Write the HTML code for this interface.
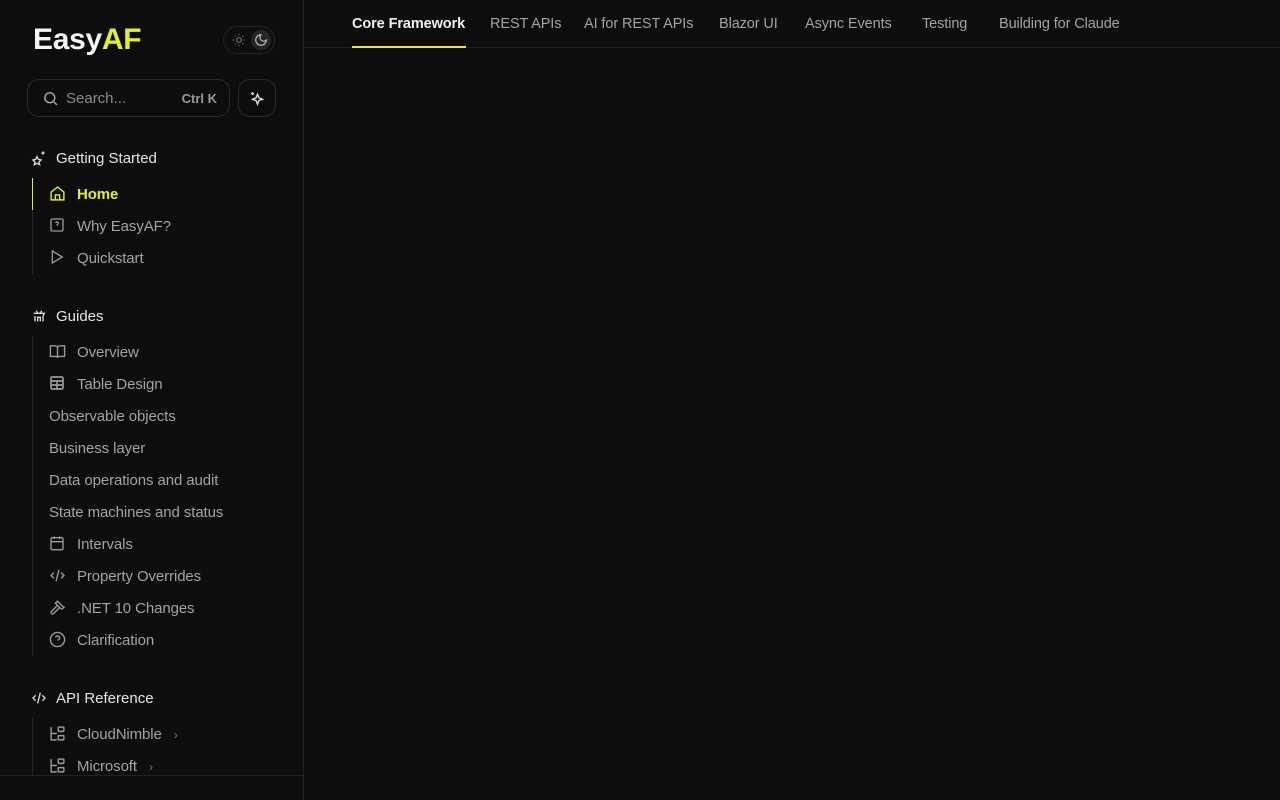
<!DOCTYPE html>
<html><head><meta charset="utf-8"><style>
*{box-sizing:border-box;margin:0;padding:0}
body{width:1280px;height:800px;background:#0d0d0d;font-family:"Liberation Sans",sans-serif;color:#a3a3a3;overflow:hidden;position:relative}
.side{position:absolute;left:0;top:0;width:304px;height:800px;border-right:1px solid #222;}
.logo{position:absolute;left:33px;top:23px;font-size:30px;font-weight:bold;color:#f5f5f5;letter-spacing:-0.3px}
.logo span{color:#e2f02a}
.toggle{position:absolute;left:223px;top:26px;width:52px;height:28px;border:1px solid #262626;border-radius:14px}
.toggle .m{position:absolute;left:27px;top:3px;width:20px;height:20px;border-radius:10px;background:#262626}
.search{position:absolute;left:27px;top:79px;width:203px;height:38px;border:1px solid #2a2a2a;border-radius:12px}
.search .t{position:absolute;left:38px;top:10px;font-size:15px;color:#8a8a8a}
.search .k{position:absolute;right:12px;top:11px;font-size:13px;color:#999;font-weight:bold}
.ai{position:absolute;left:238px;top:79px;width:38px;height:38px;border:1px solid #2a2a2a;border-radius:12px}
.sec{position:absolute;left:56px;font-size:15px;color:#e5e5e5;margin-top:1px}
.si{position:absolute;left:31px}
.vl{position:absolute;left:32px;width:1px;background:#262626}
.it{position:absolute;font-size:15px;color:#a3a3a3;margin-top:1px;letter-spacing:-0.1px}
.ic{position:absolute;left:49px}
.top{position:absolute;left:304px;top:0;right:0;height:48px;border-bottom:1px solid #222}
.nav{position:absolute;top:16px;font-size:14.5px;color:#a3a3a3;letter-spacing:-0.1px}
svg{display:block}
</style></head><body>
<div class="side">
<div class="logo">Easy<span>AF</span></div>
<div class="toggle"><svg style="position:absolute;left:8px;top:6px" width="14" height="14" viewBox="0 0 24 24" fill="none" stroke="#777" stroke-width="2"><circle cx="12" cy="12" r="4"/><path d="M12 2v2M12 20v2M4.9 4.9l1.4 1.4M17.7 17.7l1.4 1.4M2 12h2M20 12h2M4.9 19.1l1.4-1.4M17.7 6.3l1.4-1.4"/></svg><div class="m"><svg style="position:absolute;left:3px;top:3px" width="14" height="14" viewBox="0 0 24 24" fill="none" stroke="#bbb" stroke-width="2"><path d="M12 3a6 6 0 0 0 9 9 9 9 0 1 1-9-9z"/></svg></div></div>
<div class="search"><svg style="position:absolute;left:14px;top:10px" width="17" height="17" viewBox="0 0 24 24" fill="none" stroke="#aaa" stroke-width="2"><circle cx="11" cy="11" r="7"/><path d="M21 21l-4.3-4.3"/></svg><span class="t">Search...</span><span class="k">Ctrl K</span></div>
<div class="ai"><svg style="position:absolute;left:10px;top:10px" width="17" height="17" viewBox="0 0 24 24" fill="none" stroke="#ddd" stroke-width="2"><path d="M12 6l2 5 5 2-5 2-2 5-2-5-5-2 5-2z"/><path d="M5 3v4M3 5h4"/></svg></div>

<svg class="si" style="top:150px" width="16" height="16" viewBox="0 0 24 24" fill="none" stroke="#ddd" stroke-width="2"><path d="M9 10l2 4 4 1-3 3 1 4-4-2-4 2 1-4-3-3 4-1z"/><path d="M18 2v5M15.5 4.5h5"/></svg>
<div class="sec" style="top:149px">Getting Started</div>
<div class="vl" style="top:178px;height:96px"></div>
<div style="position:absolute;left:32px;top:178px;width:1px;height:32px;background:#e2f02a"></div>
<svg class="ic" style="top:185px" width="17" height="17" viewBox="0 0 24 24" fill="none" stroke="#e2f02a" stroke-width="2"><path d="M3 10l9-7 9 7v11H3z"/><path d="M9 21v-7h6v7"/></svg>
<div class="it" style="left:77px;top:185px;color:#e2f02a;font-weight:bold">Home</div>
<svg class="ic" style="top:217px" width="16" height="16" viewBox="0 0 24 24" fill="none" stroke="#999" stroke-width="2"><rect x="3" y="3" width="18" height="18" rx="2"/><path d="M10 9a2 2 0 1 1 3 2c-1 .5-1 1-1 2M12 17h.01"/></svg>
<div class="it" style="left:77px;top:217px">Why EasyAF?</div>
<svg class="ic" style="top:249px" width="16" height="16" viewBox="0 0 24 24" fill="none" stroke="#999" stroke-width="2"><path d="M5 3l15 9-15 9z"/></svg>
<div class="it" style="left:77px;top:249px">Quickstart</div>

<svg class="si" style="top:308px" width="16" height="16" viewBox="0 0 24 24" fill="none" stroke="#ddd" stroke-width="2"><path d="M4 8h16l-2 4v8M6 12v8M10 20v-6h4v6M8 4l2 4M16 4l-2 4"/></svg>
<div class="sec" style="top:307px">Guides</div>
<div class="vl" style="top:336px;height:320px"></div>
<svg class="ic" style="top:343px" width="17" height="17" viewBox="0 0 24 24" fill="none" stroke="#999" stroke-width="2"><path d="M2 4h7a3 3 0 0 1 3 3v14a2 2 0 0 0-2-2H2zM22 4h-7a3 3 0 0 0-3 3v14a2 2 0 0 1 2-2h8z"/></svg>
<div class="it" style="left:77px;top:343px">Overview</div>
<svg class="ic" style="top:375px" width="16" height="16" viewBox="0 0 24 24" fill="none" stroke="#999" stroke-width="2.5"><rect x="3" y="3" width="18" height="18" rx="2"/><path d="M3 9h18M3 15h18M12 9v12"/></svg>
<div class="it" style="left:77px;top:375px">Table Design</div>
<div class="it" style="left:49px;top:407px">Observable objects</div>
<div class="it" style="left:49px;top:439px">Business layer</div>
<div class="it" style="left:49px;top:471px">Data operations and audit</div>
<div class="it" style="left:49px;top:503px">State machines and status</div>
<svg class="ic" style="top:535px" width="16" height="16" viewBox="0 0 24 24" fill="none" stroke="#999" stroke-width="2"><rect x="3" y="4" width="18" height="18" rx="2"/><path d="M16 2v4M8 2v4M3 10h18"/></svg>
<div class="it" style="left:77px;top:535px">Intervals</div>
<svg class="ic" style="top:567px" width="17" height="17" viewBox="0 0 24 24" fill="none" stroke="#999" stroke-width="2"><path d="M7 8l-4 4 4 4M17 8l4 4-4 4M14 4l-4 16"/></svg>
<div class="it" style="left:77px;top:567px">Property Overrides</div>
<svg class="ic" style="top:599px" width="17" height="17" viewBox="0 0 24 24" fill="none" stroke="#999" stroke-width="2"><path d="M15 12l-8.5 8.5a2 2 0 0 1-3-3L12 9M17.6 15L22 10.6M20 11l-8-8-3 3 8 8"/></svg>
<div class="it" style="left:77px;top:599px;">.NET 10 Changes</div>
<svg class="ic" style="top:631px" width="17" height="17" viewBox="0 0 24 24" fill="none" stroke="#999" stroke-width="2"><circle cx="12" cy="12" r="10"/><path d="M9.1 9a3 3 0 0 1 5.8 1c0 2-3 3-3 3M12 17h.01"/></svg>
<div class="it" style="left:77px;top:631px">Clarification</div>

<svg class="si" style="top:690px" width="16" height="16" viewBox="0 0 24 24" fill="none" stroke="#ddd" stroke-width="2"><path d="M7 8l-4 4 4 4M17 8l4 4-4 4M14 4l-4 16"/></svg>
<div class="sec" style="top:689px">API Reference</div>
<div class="vl" style="top:718px;height:58px"></div>
<svg class="ic" style="top:725px" width="17" height="17" viewBox="0 0 24 24" fill="none" stroke="#999" stroke-width="2"><path d="M3 3v18h8M3 12h8"/><rect x="13" y="3" width="8" height="6" rx="1"/><rect x="13" y="15" width="8" height="6" rx="1"/></svg>
<div class="it" style="left:77px;top:725px">CloudNimble <span style="margin-left:8px;font-size:12px;color:#777">›</span></div>
<svg class="ic" style="top:757px" width="17" height="17" viewBox="0 0 24 24" fill="none" stroke="#999" stroke-width="2"><path d="M3 3v18h8M3 12h8"/><rect x="13" y="3" width="8" height="6" rx="1"/><rect x="13" y="15" width="8" height="6" rx="1"/></svg>
<div class="it" style="left:77px;top:757px">Microsoft <span style="margin-left:8px;font-size:12px;color:#777">›</span></div>
<div style="position:absolute;left:0;top:775px;width:303px;height:25px;background:#0d0d0d;border-top:1px solid #222"></div>
</div>
<div class="top">
<div class="nav" style="left:48px;color:#f0f0f0;font-weight:bold">Core Framework</div>
<div style="position:absolute;left:48px;top:46px;width:114px;height:2px;background:#e2f02a"></div>
<div class="nav" style="left:186px">REST APIs</div>
<div class="nav" style="left:280px">AI for REST APIs</div>
<div class="nav" style="left:415px">Blazor UI</div>
<div class="nav" style="left:501px">Async Events</div>
<div class="nav" style="left:618px">Testing</div>
<div class="nav" style="left:695px">Building for Claude</div>
</div>
</body></html>
